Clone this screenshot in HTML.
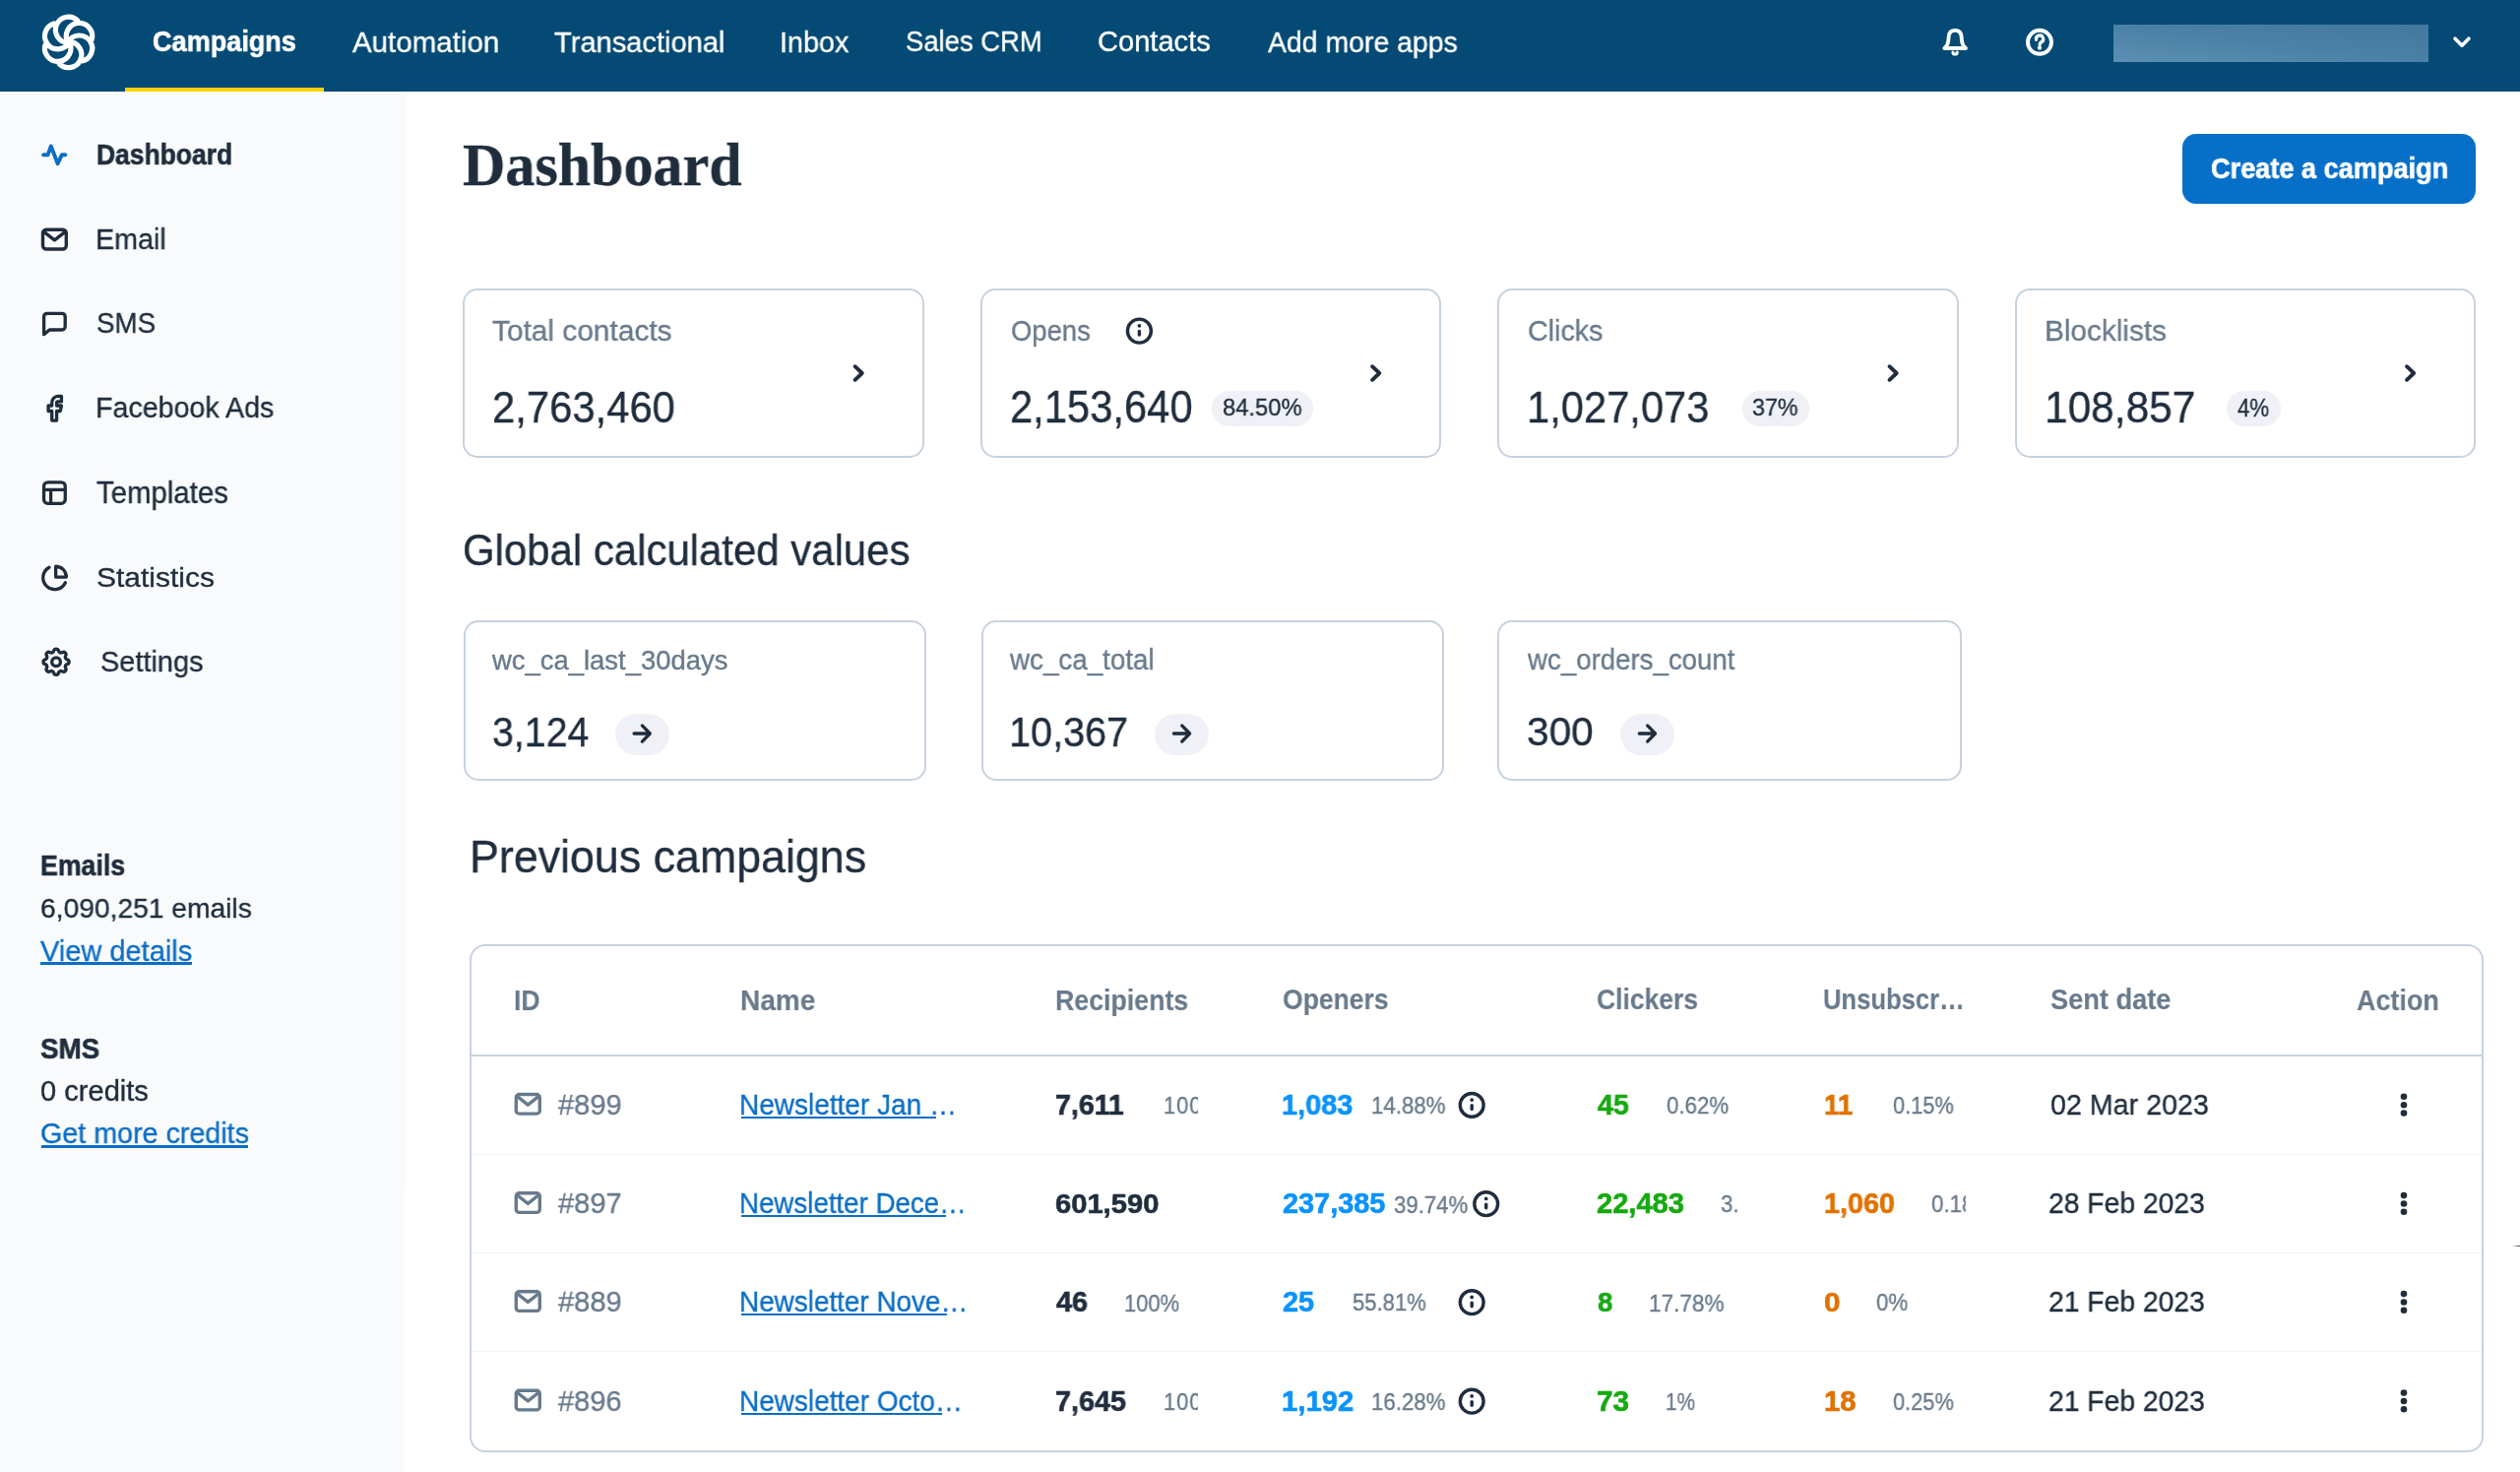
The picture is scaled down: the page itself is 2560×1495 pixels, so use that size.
<!DOCTYPE html>
<html><head><meta charset="utf-8"><title>Dashboard</title>
<style>
html,body{margin:0;padding:0}
body{width:2560px;height:1495px;overflow:hidden;position:relative;background:#fff;font-family:"Liberation Sans",sans-serif}
.t{position:absolute;white-space:nowrap;transform-origin:0 0;-webkit-text-stroke:0.35px currentColor;will-change:transform}
.b{position:absolute;box-sizing:border-box}
.card{position:absolute;box-sizing:border-box;border:2px solid #c7d2de;border-radius:15px;background:#fff}
.pill{position:absolute;background:#eff1f6}
.ul{position:absolute}
svg{position:absolute;left:0;top:0}
</style></head><body>
<div class=b style="left:0;top:0;width:2560px;height:93px;background:#044a75"></div>
<div class=b style="left:127px;top:89px;width:202px;height:4px;background:#ffd200"></div>
<div class=b style="left:2147px;top:25px;width:320px;height:38px;background:linear-gradient(to bottom left,#42789e 0%,#4b81a7 50%,#5c8fb2 100%)"></div>
<div class=b style="left:0;top:93px;width:413px;height:1111px;background:#f9fafb"></div>
<div class=b style="left:0;top:1204px;width:411px;height:291px;background:#f9fafb"></div>
<div class=b style="left:2217px;top:136px;width:298px;height:71px;border-radius:14px;background:#0670c9"></div>
<div class=b style="left:2552px;top:1264.6px;width:8px;height:1.8px;background:linear-gradient(to right,rgba(40,52,66,0),#2c3845)"></div>
<div class=card style="left:470.3px;top:293.2px;width:468.5px;height:171.5px"></div>
<div class=card style="left:995.8px;top:293.2px;width:468.5px;height:171.5px"></div>
<div class=card style="left:1521.2px;top:293.2px;width:468.5px;height:171.5px"></div>
<div class=card style="left:2046.7px;top:293.2px;width:468.5px;height:171.5px"></div>
<div class=card style="left:471.1px;top:629.6px;width:470px;height:163.4px"></div>
<div class=card style="left:996.7px;top:629.6px;width:470.4px;height:163.4px"></div>
<div class=card style="left:1521.1px;top:629.6px;width:471.9px;height:163.4px"></div>
<div class=card style="left:477.05px;top:958.6px;width:2045.6px;height:516.3px;border-radius:16px"></div>
<div class=b style="left:479px;top:1071.2px;width:2041.5px;height:1.8px;background:#c7d2de"></div>
<div class=b style="left:479px;top:1171.5px;width:2041.5px;height:1.8px;background:#eef1f5"></div>
<div class=b style="left:479px;top:1271.5px;width:2041.5px;height:1.8px;background:#eef1f5"></div>
<div class=b style="left:479px;top:1371.6px;width:2041.5px;height:1.8px;background:#eef1f5"></div>
<div class=pill style="left:1231px;top:396.9px;width:103.0px;height:36px;border-radius:18px"></div>
<div class=pill style="left:1770px;top:396.9px;width:67.7px;height:36px;border-radius:18px"></div>
<div class=pill style="left:2262.1px;top:396.9px;width:54.8px;height:36px;border-radius:18px"></div>
<div class=pill style="left:625.1px;top:724.5px;width:54.8px;height:42.3px;border-radius:21.1px"></div>
<div class=pill style="left:1173.1px;top:724.5px;width:54.8px;height:42.3px;border-radius:21.1px"></div>
<div class=pill style="left:1646px;top:724.5px;width:54.8px;height:42.3px;border-radius:21.1px"></div>
<div class=ul style="left:41.4px;top:977.3px;width:153.4px;height:2.5px;background:#0b6ec5"></div>
<div class=ul style="left:42px;top:1163.3px;width:209.9px;height:2.4px;background:#0b6ec5"></div>
<div class=ul style="left:753px;top:1134.0px;width:197.9px;height:2.2px;background:#0b6ec5"></div>
<div class=ul style="left:753px;top:1234.3px;width:207.8px;height:2.2px;background:#0b6ec5"></div>
<div class=ul style="left:753px;top:1334.3px;width:209.4px;height:2.2px;background:#0b6ec5"></div>
<div class=ul style="left:753px;top:1434.8px;width:203.8px;height:2.2px;background:#0b6ec5"></div>
<svg width="2560" height="1495" viewBox="0 0 2560 1495"><path d="M69.60,43.50 A13.2,13.2 0 1 1 79.71,21.82 M69.08,43.20 A13.2,13.2 0 1 1 92.92,41.11 M69.08,42.60 A13.2,13.2 0 1 1 82.80,62.20 M69.60,42.30 A13.2,13.2 0 1 1 59.49,63.98 M70.12,42.60 A13.2,13.2 0 1 1 46.28,44.69 M70.12,43.20 A13.2,13.2 0 1 1 56.40,23.60" fill="none" stroke="#ffffff" stroke-width="5.2" stroke-linejoin="round" stroke-linecap="butt"/>
<path d="M1975.3,49 Q1979,46 1979.3,41 L1979.6,37.5 Q1980,30.9 1986.1,30.9 Q1992.2,30.9 1992.6,37.5 L1992.9,41 Q1993.2,46 1997,49 Z" fill="none" stroke="#ffffff" stroke-width="3.8" stroke-linecap="round" stroke-linejoin="round" />
<path d="M1983.9,52.9 A2.2,2.2 0 0 0 1988.3,52.9" fill="none" stroke="#ffffff" stroke-width="3.0" stroke-linecap="round" stroke-linejoin="round" />
<circle cx="2072" cy="42.8" r="12" fill="none" stroke="#ffffff" stroke-width="3.9" stroke-linecap="round" stroke-linejoin="round" />
<path d="M2068.5,40.3 A3.6,3.6 0 1 1 2073.7,42.8 Q2072.1,43.7 2072.1,45.4" fill="none" stroke="#ffffff" stroke-width="3.3" stroke-linecap="round" stroke-linejoin="round" />
<circle cx="2072" cy="48.7" r="2.1" fill="#ffffff"/>
<path d="M2494,39.2 L2501,46.2 L2508,39.2" fill="none" stroke="#ffffff" stroke-width="3.6" stroke-linecap="round" stroke-linejoin="round" />
<path d="M44.2,157.3 H48.6 L51.8,148.4 L58.6,166.2 L62.8,157.3 H66.4" fill="none" stroke="#0b6ec5" stroke-width="3.9" stroke-linecap="round" stroke-linejoin="round" />
<rect x="43.5" y="233.3" width="23.8" height="19.7" rx="3.5" fill="none" stroke="#1f2d3d" stroke-width="3.4" stroke-linecap="round" stroke-linejoin="round" />
<path d="M44.8,235.6 L55.4,243.8 L66,235.6" fill="none" stroke="#1f2d3d" stroke-width="3.4" stroke-linecap="round" stroke-linejoin="round" />
<path d="M44.6,339.6 V321.5 A3.2,3.2 0 0 1 47.8,318.3 H63 A3.2,3.2 0 0 1 66.2,321.5 V331.8 A3.2,3.2 0 0 1 63,335 H50.3 Z" fill="none" stroke="#1f2d3d" stroke-width="3.3" stroke-linecap="round" stroke-linejoin="round" />
<path transform="translate(49.05,402.45) scale(1.218,1.367) translate(-7,-3)" d="M7 10v4h3v7h4v-7h3l1 -4h-4v-2a1 1 0 0 1 1 -1h3v-4h-3a5 5 0 0 0 -5 5v2h-3z" fill="none" stroke="#1f2d3d" stroke-width="3.3" stroke-linecap="round" stroke-linejoin="round" vector-effect="non-scaling-stroke"/>
<rect x="44.55" y="489.85" width="21.7" height="21.5" rx="4" fill="none" stroke="#1f2d3d" stroke-width="3.3" stroke-linecap="round" stroke-linejoin="round" />
<path d="M44.55,497.4 H66.25 M51.6,497.4 V511.35" fill="none" stroke="#1f2d3d" stroke-width="3.3" stroke-linecap="round" stroke-linejoin="round" />
<path d="M50,576.2 A11.9,11.9 0 1 0 66.4,591.7" fill="none" stroke="#1f2d3d" stroke-width="3.3" stroke-linecap="round" stroke-linejoin="round" />
<path d="M56.65,575.25 V586.05 H67.35 A10.7,10.8 0 0 0 56.65,575.25 Z" fill="none" stroke="#1f2d3d" stroke-width="3.3" stroke-linecap="round" stroke-linejoin="round" />
<path transform="translate(39.65,654.85) scale(1.45)" d="M10.325 4.317c.426 -1.756 2.924 -1.756 3.35 0a1.724 1.724 0 0 0 2.573 1.066c1.543 -.94 3.31 .826 2.37 2.37a1.724 1.724 0 0 0 1.065 2.572c1.756 .426 1.756 2.924 0 3.35a1.724 1.724 0 0 0 -1.066 2.573c.94 1.543 -.826 3.31 -2.37 2.37a1.724 1.724 0 0 0 -2.572 1.065c-.426 1.756 -2.924 1.756 -3.35 0a1.724 1.724 0 0 0 -2.573 -1.066c-1.543 .94 -3.31 -.826 -2.37 -2.37a1.724 1.724 0 0 0 -1.065 -2.572c-1.756 -.426 -1.756 -2.924 0 -3.35a1.724 1.724 0 0 0 1.066 -2.573c-.94 -1.543 .826 -3.31 2.37 -2.37c1 .608 2.296 .07 2.572 -1.065z M9 12a3 3 0 1 0 6 0a3 3 0 0 0 -6 0" fill="none" stroke="#1f2d3d" stroke-width="2.3" stroke-linecap="round" stroke-linejoin="round" />
<path d="M868.6,372.2 L875.8,379 L868.6,385.8" fill="none" stroke="#1f2d3d" stroke-width="3.9" stroke-linecap="round" stroke-linejoin="round" />
<path d="M1394.1,372.2 L1401.3,379 L1394.1,385.8" fill="none" stroke="#1f2d3d" stroke-width="3.9" stroke-linecap="round" stroke-linejoin="round" />
<path d="M1919.5,372.2 L1926.7,379 L1919.5,385.8" fill="none" stroke="#1f2d3d" stroke-width="3.9" stroke-linecap="round" stroke-linejoin="round" />
<path d="M2445.0,372.2 L2452.2,379 L2445.0,385.8" fill="none" stroke="#1f2d3d" stroke-width="3.9" stroke-linecap="round" stroke-linejoin="round" />
<circle cx="1157.4" cy="336.1" r="12" fill="none" stroke="#1f2d3d" stroke-width="3.4" stroke-linecap="round" stroke-linejoin="round" /><circle cx="1157.4" cy="330.8" r="1.85" fill="#1f2d3d"/><path d="M1157.4,336.5 V340.1" fill="none" stroke="#1f2d3d" stroke-width="3.4" stroke-linecap="round" stroke-linejoin="round" />
<path d="M644.1,745 H660.3 M652.4,736.9 L660.3,745 L652.4,753.1" fill="none" stroke="#1f2d3d" stroke-width="3.3" stroke-linecap="round" stroke-linejoin="round" />
<path d="M1192.4,745 H1208.6 M1200.7,736.9 L1208.6,745 L1200.7,753.1" fill="none" stroke="#1f2d3d" stroke-width="3.3" stroke-linecap="round" stroke-linejoin="round" />
<path d="M1665.3,745 H1681.5 M1673.6,736.9 L1681.5,745 L1673.6,753.1" fill="none" stroke="#1f2d3d" stroke-width="3.3" stroke-linecap="round" stroke-linejoin="round" />
<rect x="524.3" y="1111.5" width="24" height="19.6" rx="3.2" fill="none" stroke="#687a8b" stroke-width="3.4" stroke-linecap="round" stroke-linejoin="round" />
<path d="M525.6,1113.7 L536.3,1122.1 L547,1113.7" fill="none" stroke="#687a8b" stroke-width="3.4" stroke-linecap="round" stroke-linejoin="round" />
<circle cx="1495.1999999999998" cy="1122.4" r="11.9" fill="none" stroke="#1f2d3d" stroke-width="3.4" stroke-linecap="round" stroke-linejoin="round" /><circle cx="1495.1999999999998" cy="1117.1" r="1.85" fill="#1f2d3d"/><path d="M1495.1999999999998,1122.8 V1126.4" fill="none" stroke="#1f2d3d" stroke-width="3.4" stroke-linecap="round" stroke-linejoin="round" />
<circle cx="2442" cy="1113.8" r="3.3" fill="#1f2d3d"/>
<circle cx="2442" cy="1122.2" r="3.3" fill="#1f2d3d"/>
<circle cx="2442" cy="1130.5" r="3.3" fill="#1f2d3d"/>
<rect x="524.3" y="1211.8" width="24" height="19.6" rx="3.2" fill="none" stroke="#687a8b" stroke-width="3.4" stroke-linecap="round" stroke-linejoin="round" />
<path d="M525.6,1214.0 L536.3,1222.4 L547,1214.0" fill="none" stroke="#687a8b" stroke-width="3.4" stroke-linecap="round" stroke-linejoin="round" />
<circle cx="1509.6999999999998" cy="1222.7" r="11.9" fill="none" stroke="#1f2d3d" stroke-width="3.4" stroke-linecap="round" stroke-linejoin="round" /><circle cx="1509.6999999999998" cy="1217.4" r="1.85" fill="#1f2d3d"/><path d="M1509.6999999999998,1223.1 V1226.7" fill="none" stroke="#1f2d3d" stroke-width="3.4" stroke-linecap="round" stroke-linejoin="round" />
<circle cx="2442" cy="1214.1" r="3.3" fill="#1f2d3d"/>
<circle cx="2442" cy="1222.5" r="3.3" fill="#1f2d3d"/>
<circle cx="2442" cy="1230.8" r="3.3" fill="#1f2d3d"/>
<rect x="524.3" y="1311.8" width="24" height="19.6" rx="3.2" fill="none" stroke="#687a8b" stroke-width="3.4" stroke-linecap="round" stroke-linejoin="round" />
<path d="M525.6,1314.0 L536.3,1322.4 L547,1314.0" fill="none" stroke="#687a8b" stroke-width="3.4" stroke-linecap="round" stroke-linejoin="round" />
<circle cx="1495.1999999999998" cy="1322.7" r="11.9" fill="none" stroke="#1f2d3d" stroke-width="3.4" stroke-linecap="round" stroke-linejoin="round" /><circle cx="1495.1999999999998" cy="1317.4" r="1.85" fill="#1f2d3d"/><path d="M1495.1999999999998,1323.1 V1326.7" fill="none" stroke="#1f2d3d" stroke-width="3.4" stroke-linecap="round" stroke-linejoin="round" />
<circle cx="2442" cy="1314.1" r="3.3" fill="#1f2d3d"/>
<circle cx="2442" cy="1322.5" r="3.3" fill="#1f2d3d"/>
<circle cx="2442" cy="1330.8" r="3.3" fill="#1f2d3d"/>
<rect x="524.3" y="1412.3" width="24" height="19.6" rx="3.2" fill="none" stroke="#687a8b" stroke-width="3.4" stroke-linecap="round" stroke-linejoin="round" />
<path d="M525.6,1414.5 L536.3,1422.9 L547,1414.5" fill="none" stroke="#687a8b" stroke-width="3.4" stroke-linecap="round" stroke-linejoin="round" />
<circle cx="1495.1999999999998" cy="1423.2" r="11.9" fill="none" stroke="#1f2d3d" stroke-width="3.4" stroke-linecap="round" stroke-linejoin="round" /><circle cx="1495.1999999999998" cy="1417.9" r="1.85" fill="#1f2d3d"/><path d="M1495.1999999999998,1423.6 V1427.2" fill="none" stroke="#1f2d3d" stroke-width="3.4" stroke-linecap="round" stroke-linejoin="round" />
<circle cx="2442" cy="1414.6" r="3.3" fill="#1f2d3d"/>
<circle cx="2442" cy="1423.0" r="3.3" fill="#1f2d3d"/>
<circle cx="2442" cy="1431.3" r="3.3" fill="#1f2d3d"/></svg>
<div class=t style="left:155.12px;top:28.41px;font-family:'Liberation Sans',sans-serif;font-weight:700;font-size:29.15px;line-height:29.15px;color:#ffffff;transform:scaleX(0.9289);-webkit-text-stroke-width:0.6px">Campaigns</div>
<div class=t style="left:357.93px;top:27.73px;font-family:'Liberation Sans',sans-serif;font-weight:400;font-size:30.15px;line-height:30.15px;color:#ffffff;transform:scaleX(0.9789)">Automation</div>
<div class=t style="left:563.25px;top:27.73px;font-family:'Liberation Sans',sans-serif;font-weight:400;font-size:29.93px;line-height:29.93px;color:#ffffff;transform:scaleX(0.9717)">Transactional</div>
<div class=t style="left:792.39px;top:27.73px;font-family:'Liberation Sans',sans-serif;font-weight:400;font-size:29.93px;line-height:29.93px;color:#ffffff;transform:scaleX(0.9611)">Inbox</div>
<div class=t style="left:920.34px;top:28.43px;font-family:'Liberation Sans',sans-serif;font-weight:400;font-size:29.08px;line-height:29.08px;color:#ffffff;transform:scaleX(0.9433)">Sales CRM</div>
<div class=t style="left:1115.42px;top:28.43px;font-family:'Liberation Sans',sans-serif;font-weight:400;font-size:29.08px;line-height:29.08px;color:#ffffff;transform:scaleX(0.9972)">Contacts</div>
<div class=t style="left:1288.03px;top:27.73px;font-family:'Liberation Sans',sans-serif;font-weight:400;font-size:30.15px;line-height:30.15px;color:#ffffff;transform:scaleX(0.9432)">Add more apps</div>
<div class=t style="left:98.48px;top:142.80px;font-family:'Liberation Sans',sans-serif;font-weight:700;font-size:28.84px;line-height:28.84px;color:#1f2d3d;transform:scaleX(0.9176);-webkit-text-stroke-width:0.6px">Dashboard</div>
<div class=t style="left:97.48px;top:228.02px;font-family:'Liberation Sans',sans-serif;font-weight:400;font-size:29.35px;line-height:29.35px;color:#1f2d3d;transform:scaleX(0.9788)">Email</div>
<div class=t style="left:97.92px;top:314.44px;font-family:'Liberation Sans',sans-serif;font-weight:400;font-size:28.66px;line-height:28.66px;color:#1f2d3d;transform:scaleX(0.9693)">SMS</div>
<div class=t style="left:97.48px;top:399.32px;font-family:'Liberation Sans',sans-serif;font-weight:400;font-size:29.49px;line-height:29.49px;color:#1f2d3d;transform:scaleX(0.9706)">Facebook Ads</div>
<div class=t style="left:98.44px;top:484.82px;font-family:'Liberation Sans',sans-serif;font-weight:400;font-size:30.51px;line-height:30.51px;color:#1f2d3d;transform:scaleX(0.9637)">Templates</div>
<div class=t style="left:97.83px;top:571.64px;font-family:'Liberation Sans',sans-serif;font-weight:400;font-size:28.52px;line-height:28.52px;color:#1f2d3d;transform:scaleX(1.0514)">Statistics</div>
<div class=t style="left:101.87px;top:657.03px;font-family:'Liberation Sans',sans-serif;font-weight:400;font-size:29.79px;line-height:29.79px;color:#1f2d3d;transform:scaleX(0.9714)">Settings</div>
<div class=t style="left:40.96px;top:865.20px;font-family:'Liberation Sans',sans-serif;font-weight:700;font-size:28.84px;line-height:28.84px;color:#1f2d3d;transform:scaleX(0.9261);-webkit-text-stroke-width:0.6px">Emails</div>
<div class=t style="left:41.16px;top:907.94px;font-family:'Liberation Sans',sans-serif;font-weight:400;font-size:28.38px;line-height:28.38px;color:#1f2d3d;transform:scaleX(0.9941)">6,090,251 emails</div>
<div class=t style="left:41.43px;top:950.53px;font-family:'Liberation Sans',sans-serif;font-weight:400;font-size:29.78px;line-height:29.78px;color:#0b6ec5;transform:scaleX(0.9742)">View details</div>
<div class=t style="left:41.36px;top:1051.11px;font-family:'Liberation Sans',sans-serif;font-weight:700;font-size:28.59px;line-height:28.59px;color:#1f2d3d;transform:scaleX(0.9743);-webkit-text-stroke-width:0.6px">SMS</div>
<div class=t style="left:41.41px;top:1094.13px;font-family:'Liberation Sans',sans-serif;font-weight:400;font-size:29.08px;line-height:29.08px;color:#1f2d3d;transform:scaleX(0.9985)">0 credits</div>
<div class=t style="left:40.74px;top:1136.94px;font-family:'Liberation Sans',sans-serif;font-weight:400;font-size:28.94px;line-height:28.94px;color:#0b6ec5;transform:scaleX(0.9911)">Get more credits</div>
<div class=t style="left:469.97px;top:137.42px;font-family:'Liberation Serif',serif;font-weight:700;font-size:61.30px;line-height:61.30px;color:#1f2d3d;transform:scaleX(0.9794)">Dashboard</div>
<div class=t style="left:2245.81px;top:157.11px;font-family:'Liberation Sans',sans-serif;font-weight:700;font-size:29.15px;line-height:29.15px;color:#ffffff;transform:scaleX(0.9310);-webkit-text-stroke-width:0.6px">Create a campaign</div>
<div class=t style="left:500.33px;top:320.72px;font-family:'Liberation Sans',sans-serif;font-weight:400;font-size:30.07px;line-height:30.07px;color:#687a8b;transform:scaleX(0.9929)">Total contacts</div>
<div class=t style="left:499.78px;top:391.93px;font-family:'Liberation Sans',sans-serif;font-weight:400;font-size:44.42px;line-height:44.42px;color:#1f2d3d;transform:scaleX(0.9410)">2,763,460</div>
<div class=t style="left:1026.64px;top:321.13px;font-family:'Liberation Sans',sans-serif;font-weight:400;font-size:29.93px;line-height:29.93px;color:#687a8b;transform:scaleX(0.9161)">Opens</div>
<div class=t style="left:1025.79px;top:391.43px;font-family:'Liberation Sans',sans-serif;font-weight:400;font-size:45.58px;line-height:45.58px;color:#1f2d3d;transform:scaleX(0.9151)">2,153,640</div>
<div class=t style="left:1242.01px;top:402.38px;font-family:'Liberation Sans',sans-serif;font-weight:400;font-size:24.15px;line-height:24.15px;color:#1f2d3d;transform:scaleX(0.9837)">84.50%</div>
<div class=t style="left:1551.64px;top:321.13px;font-family:'Liberation Sans',sans-serif;font-weight:400;font-size:29.93px;line-height:29.93px;color:#687a8b;transform:scaleX(0.9577)">Clicks</div>
<div class=t style="left:1551.35px;top:391.32px;font-family:'Liberation Sans',sans-serif;font-weight:400;font-size:45.29px;line-height:45.29px;color:#1f2d3d;transform:scaleX(0.9202)">1,027,073</div>
<div class=t style="left:1780.24px;top:402.38px;font-family:'Liberation Sans',sans-serif;font-weight:400;font-size:24.15px;line-height:24.15px;color:#1f2d3d;transform:scaleX(0.9646)">37%</div>
<div class=t style="left:2076.80px;top:320.82px;font-family:'Liberation Sans',sans-serif;font-weight:400;font-size:29.93px;line-height:29.93px;color:#687a8b;transform:scaleX(0.9938)">Blocklists</div>
<div class=t style="left:2077.39px;top:391.32px;font-family:'Liberation Sans',sans-serif;font-weight:400;font-size:45.29px;line-height:45.29px;color:#1f2d3d;transform:scaleX(0.9367)">108,857</div>
<div class=t style="left:2273.42px;top:401.62px;font-family:'Liberation Sans',sans-serif;font-weight:400;font-size:24.86px;line-height:24.86px;color:#1f2d3d;transform:scaleX(0.8962)">4%</div>
<div class=t style="left:470.48px;top:537.59px;font-family:'Liberation Sans',sans-serif;font-weight:400;font-size:43.45px;line-height:43.45px;color:#1f2d3d;transform:scaleX(0.9652)">Global calculated values</div>
<div class=t style="left:500.28px;top:657.05px;font-family:'Liberation Sans',sans-serif;font-weight:400;font-size:27.25px;line-height:27.25px;color:#687a8b;transform:scaleX(1.0064)">wc_ca_last_30days</div>
<div class=t style="left:499.60px;top:722.73px;font-family:'Liberation Sans',sans-serif;font-weight:400;font-size:42.39px;line-height:42.39px;color:#1f2d3d;transform:scaleX(0.9276)">3,124</div>
<div class=t style="left:1026.27px;top:656.33px;font-family:'Liberation Sans',sans-serif;font-weight:400;font-size:29.17px;line-height:29.17px;color:#687a8b;transform:scaleX(0.9521)">wc_ca_total</div>
<div class=t style="left:1025.10px;top:722.73px;font-family:'Liberation Sans',sans-serif;font-weight:400;font-size:42.39px;line-height:42.39px;color:#1f2d3d;transform:scaleX(0.9343)">10,367</div>
<div class=t style="left:1551.58px;top:656.04px;font-family:'Liberation Sans',sans-serif;font-weight:400;font-size:28.78px;line-height:28.78px;color:#687a8b;transform:scaleX(0.9606)">wc_orders_count</div>
<div class=t style="left:1550.55px;top:723.31px;font-family:'Liberation Sans',sans-serif;font-weight:400;font-size:41.20px;line-height:41.20px;color:#1f2d3d;transform:scaleX(0.9854)">300</div>
<div class=t style="left:477.19px;top:847.12px;font-family:'Liberation Sans',sans-serif;font-weight:400;font-size:46.88px;line-height:46.88px;color:#1f2d3d;transform:scaleX(0.9550)">Previous campaigns</div>
<div class=t style="left:522.15px;top:1000.62px;font-family:'Liberation Sans',sans-serif;font-weight:700;font-size:29.64px;line-height:29.64px;color:#687a8b;transform:scaleX(0.8966);-webkit-text-stroke-width:0.15px">ID</div>
<div class=t style="left:752.25px;top:1000.62px;font-family:'Liberation Sans',sans-serif;font-weight:700;font-size:29.64px;line-height:29.64px;color:#687a8b;transform:scaleX(0.9467);-webkit-text-stroke-width:0.15px">Name</div>
<div class=t style="left:1071.64px;top:1000.62px;font-family:'Liberation Sans',sans-serif;font-weight:700;font-size:29.85px;line-height:29.85px;color:#687a8b;transform:scaleX(0.8956);-webkit-text-stroke-width:0.15px">Recipients</div>
<div class=t style="left:1302.61px;top:1001.34px;font-family:'Liberation Sans',sans-serif;font-weight:700;font-size:28.80px;line-height:28.80px;color:#687a8b;transform:scaleX(0.9210);-webkit-text-stroke-width:0.15px">Openers</div>
<div class=t style="left:1622.32px;top:1001.34px;font-family:'Liberation Sans',sans-serif;font-weight:700;font-size:28.80px;line-height:28.80px;color:#687a8b;transform:scaleX(0.9199);-webkit-text-stroke-width:0.15px">Clickers</div>
<div class=t style="left:1851.84px;top:1001.33px;font-family:'Liberation Sans',sans-serif;font-weight:700;font-size:29.21px;line-height:29.21px;color:#687a8b;transform:scaleX(0.8768);-webkit-text-stroke-width:0.15px">Unsubscr…</div>
<div class=t style="left:2082.86px;top:1001.34px;font-family:'Liberation Sans',sans-serif;font-weight:700;font-size:28.80px;line-height:28.80px;color:#687a8b;transform:scaleX(0.9445);-webkit-text-stroke-width:0.15px">Sent date</div>
<div class=t style="left:2394.40px;top:1000.62px;font-family:'Liberation Sans',sans-serif;font-weight:700;font-size:29.64px;line-height:29.64px;color:#687a8b;transform:scaleX(0.9096);-webkit-text-stroke-width:0.15px">Action</div>
<div class=t style="left:566.53px;top:1106.83px;font-family:'Liberation Sans',sans-serif;font-weight:400;font-size:29.85px;line-height:29.85px;color:#687a8b;transform:scaleX(0.9748)">#899</div>
<div class=t style="left:750.93px;top:1106.83px;font-family:'Liberation Sans',sans-serif;font-weight:400;font-size:29.64px;line-height:29.64px;color:#0b6ec5;transform:scaleX(0.9450)">Newsletter Jan …</div>
<div class=t style="left:1071.92px;top:1106.70px;font-family:'Liberation Sans',sans-serif;font-weight:700;font-size:29.28px;line-height:29.28px;color:#1f2d3d;transform:scaleX(0.9751);-webkit-text-stroke-width:0.6px">7,611</div>
<div class=t style="left:1182.00px;top:1108.23px;width:34.70px;height:31.41px;overflow:hidden"><div class=t style="left:-0.47px;top:4px;font-family:'Liberation Sans',sans-serif;font-weight:400;font-size:23.41px;line-height:23.41px;color:#687a8b;transform:scaleX(0.9375);letter-spacing:1.0px">100%</div></div>
<div class=t style="left:1302.42px;top:1106.70px;font-family:'Liberation Sans',sans-serif;font-weight:700;font-size:29.28px;line-height:29.28px;color:#0b93fb;transform:scaleX(0.9863);-webkit-text-stroke-width:0.6px">1,083</div>
<div class=t style="left:1392.80px;top:1112.23px;font-family:'Liberation Sans',sans-serif;font-weight:400;font-size:23.41px;line-height:23.41px;color:#687a8b;transform:scaleX(0.9515)">14.88%</div>
<div class=t style="left:1622.67px;top:1106.70px;font-family:'Liberation Sans',sans-serif;font-weight:700;font-size:29.28px;line-height:29.28px;color:#17a912;transform:scaleX(0.9769);-webkit-text-stroke-width:0.6px">45</div>
<div class=t style="left:1692.58px;top:1111.99px;font-family:'Liberation Sans',sans-serif;font-weight:400;font-size:23.41px;line-height:23.41px;color:#687a8b;transform:scaleX(0.9515)">0.62%</div>
<div class=t style="left:1852.90px;top:1106.70px;font-family:'Liberation Sans',sans-serif;font-weight:700;font-size:29.28px;line-height:29.28px;color:#e07200;transform:scaleX(0.9451);-webkit-text-stroke-width:0.6px">11</div>
<div class=t style="left:1922.70px;top:1112.23px;font-family:'Liberation Sans',sans-serif;font-weight:400;font-size:23.41px;line-height:23.41px;color:#687a8b;transform:scaleX(0.9311)">0.15%</div>
<div class=t style="left:2082.83px;top:1107.54px;font-family:'Liberation Sans',sans-serif;font-weight:400;font-size:28.80px;line-height:28.80px;color:#1f2d3d;transform:scaleX(0.9942)">02 Mar 2023</div>
<div class=t style="left:566.53px;top:1207.12px;font-family:'Liberation Sans',sans-serif;font-weight:400;font-size:29.85px;line-height:29.85px;color:#687a8b;transform:scaleX(0.9748)">#897</div>
<div class=t style="left:750.96px;top:1207.12px;font-family:'Liberation Sans',sans-serif;font-weight:400;font-size:29.64px;line-height:29.64px;color:#0b6ec5;transform:scaleX(0.9347)">Newsletter Dece…</div>
<div class=t style="left:1072.18px;top:1207.72px;font-family:'Liberation Sans',sans-serif;font-weight:700;font-size:28.45px;line-height:28.45px;color:#1f2d3d;transform:scaleX(1.0247);-webkit-text-stroke-width:0.6px">601,590</div>
<div class=t style="left:1302.99px;top:1208.00px;font-family:'Liberation Sans',sans-serif;font-weight:700;font-size:28.86px;line-height:28.86px;color:#0b93fb;transform:scaleX(1.0006);-webkit-text-stroke-width:0.6px">237,385</div>
<div class=t style="left:1416.39px;top:1212.53px;font-family:'Liberation Sans',sans-serif;font-weight:400;font-size:23.41px;line-height:23.41px;color:#687a8b;transform:scaleX(0.9479)">39.74%</div>
<div class=t style="left:1622.08px;top:1208.00px;font-family:'Liberation Sans',sans-serif;font-weight:700;font-size:28.86px;line-height:28.86px;color:#17a912;transform:scaleX(1.0065);-webkit-text-stroke-width:0.6px">22,483</div>
<div class=t style="left:1748.48px;top:1212.29px;font-family:'Liberation Sans',sans-serif;font-weight:400;font-size:23.41px;line-height:23.41px;color:#687a8b;transform:scaleX(0.9515)">3.</div>
<div class=t style="left:1852.83px;top:1207.00px;font-family:'Liberation Sans',sans-serif;font-weight:700;font-size:29.28px;line-height:29.28px;color:#e07200;transform:scaleX(0.9813);-webkit-text-stroke-width:0.6px">1,060</div>
<div class=t style="left:1962.00px;top:1208.29px;width:34.80px;height:31.41px;overflow:hidden"><div class=t style="left:0.28px;top:4px;font-family:'Liberation Sans',sans-serif;font-weight:400;font-size:23.41px;line-height:23.41px;color:#687a8b;transform:scaleX(0.9515)">0.18%</div></div>
<div class=t style="left:2081.26px;top:1208.12px;font-family:'Liberation Sans',sans-serif;font-weight:400;font-size:29.21px;line-height:29.21px;color:#1f2d3d;transform:scaleX(0.9683)">28 Feb 2023</div>
<div class=t style="left:566.53px;top:1307.12px;font-family:'Liberation Sans',sans-serif;font-weight:400;font-size:29.85px;line-height:29.85px;color:#687a8b;transform:scaleX(0.9748)">#889</div>
<div class=t style="left:750.94px;top:1307.12px;font-family:'Liberation Sans',sans-serif;font-weight:400;font-size:29.64px;line-height:29.64px;color:#0b6ec5;transform:scaleX(0.9410)">Newsletter Nove…</div>
<div class=t style="left:1072.77px;top:1307.00px;font-family:'Liberation Sans',sans-serif;font-weight:700;font-size:29.28px;line-height:29.28px;color:#1f2d3d;transform:scaleX(0.9829);-webkit-text-stroke-width:0.6px">46</div>
<div class=t style="left:1141.83px;top:1312.53px;font-family:'Liberation Sans',sans-serif;font-weight:400;font-size:23.41px;line-height:23.41px;color:#687a8b;transform:scaleX(0.9375)">100%</div>
<div class=t style="left:1303.00px;top:1308.00px;font-family:'Liberation Sans',sans-serif;font-weight:700;font-size:28.86px;line-height:28.86px;color:#0b93fb;transform:scaleX(0.9934);-webkit-text-stroke-width:0.6px">25</div>
<div class=t style="left:1373.79px;top:1312.29px;font-family:'Liberation Sans',sans-serif;font-weight:400;font-size:23.07px;line-height:23.07px;color:#687a8b;transform:scaleX(0.9551)">55.81%</div>
<div class=t style="left:1622.87px;top:1307.72px;font-family:'Liberation Sans',sans-serif;font-weight:700;font-size:28.45px;line-height:28.45px;color:#17a912;transform:scaleX(0.9728);-webkit-text-stroke-width:0.6px">8</div>
<div class=t style="left:1674.88px;top:1312.53px;font-family:'Liberation Sans',sans-serif;font-weight:400;font-size:23.41px;line-height:23.41px;color:#687a8b;transform:scaleX(0.9646)">17.78%</div>
<div class=t style="left:1852.71px;top:1307.72px;font-family:'Liberation Sans',sans-serif;font-weight:700;font-size:28.45px;line-height:28.45px;color:#e07200;transform:scaleX(1.0434);-webkit-text-stroke-width:0.6px">0</div>
<div class=t style="left:1905.78px;top:1312.29px;font-family:'Liberation Sans',sans-serif;font-weight:400;font-size:23.41px;line-height:23.41px;color:#687a8b;transform:scaleX(0.9515)">0%</div>
<div class=t style="left:2081.26px;top:1308.12px;font-family:'Liberation Sans',sans-serif;font-weight:400;font-size:29.21px;line-height:29.21px;color:#1f2d3d;transform:scaleX(0.9683)">21 Feb 2023</div>
<div class=t style="left:566.53px;top:1407.62px;font-family:'Liberation Sans',sans-serif;font-weight:400;font-size:29.85px;line-height:29.85px;color:#687a8b;transform:scaleX(0.9725)">#896</div>
<div class=t style="left:750.94px;top:1407.62px;font-family:'Liberation Sans',sans-serif;font-weight:400;font-size:29.64px;line-height:29.64px;color:#0b6ec5;transform:scaleX(0.9437)">Newsletter Octo…</div>
<div class=t style="left:1071.91px;top:1407.50px;font-family:'Liberation Sans',sans-serif;font-weight:700;font-size:29.28px;line-height:29.28px;color:#1f2d3d;transform:scaleX(0.9812);-webkit-text-stroke-width:0.6px">7,645</div>
<div class=t style="left:1182.00px;top:1409.03px;width:34.70px;height:31.41px;overflow:hidden"><div class=t style="left:-0.47px;top:4px;font-family:'Liberation Sans',sans-serif;font-weight:400;font-size:23.41px;line-height:23.41px;color:#687a8b;transform:scaleX(0.9375);letter-spacing:1.0px">100%</div></div>
<div class=t style="left:1302.40px;top:1407.50px;font-family:'Liberation Sans',sans-serif;font-weight:700;font-size:29.28px;line-height:29.28px;color:#0b93fb;transform:scaleX(0.9969);-webkit-text-stroke-width:0.6px">1,192</div>
<div class=t style="left:1392.80px;top:1413.03px;font-family:'Liberation Sans',sans-serif;font-weight:400;font-size:23.41px;line-height:23.41px;color:#687a8b;transform:scaleX(0.9515)">16.28%</div>
<div class=t style="left:1621.76px;top:1407.50px;font-family:'Liberation Sans',sans-serif;font-weight:700;font-size:29.28px;line-height:29.28px;color:#17a912;transform:scaleX(1.0148);-webkit-text-stroke-width:0.6px">73</div>
<div class=t style="left:1691.92px;top:1413.03px;font-family:'Liberation Sans',sans-serif;font-weight:400;font-size:23.41px;line-height:23.41px;color:#687a8b;transform:scaleX(0.8881)">1%</div>
<div class=t style="left:1852.80px;top:1407.50px;font-family:'Liberation Sans',sans-serif;font-weight:700;font-size:29.28px;line-height:29.28px;color:#e07200;transform:scaleX(0.9995);-webkit-text-stroke-width:0.6px">18</div>
<div class=t style="left:1922.70px;top:1412.79px;font-family:'Liberation Sans',sans-serif;font-weight:400;font-size:23.07px;line-height:23.07px;color:#687a8b;transform:scaleX(0.9446)">0.25%</div>
<div class=t style="left:2081.26px;top:1408.62px;font-family:'Liberation Sans',sans-serif;font-weight:400;font-size:29.21px;line-height:29.21px;color:#1f2d3d;transform:scaleX(0.9683)">21 Feb 2023</div>
</body></html>
